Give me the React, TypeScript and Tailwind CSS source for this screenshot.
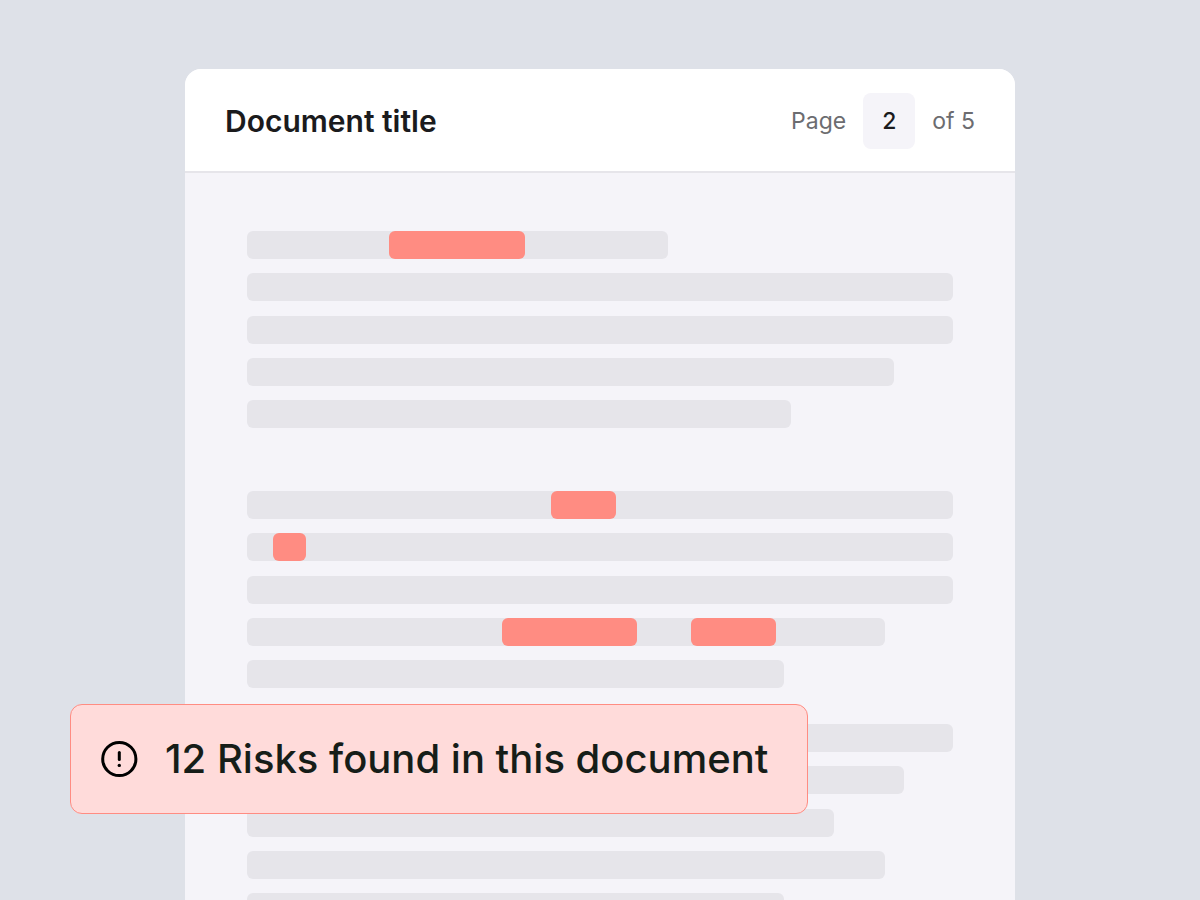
import { useState } from "react";

type Mark = { start: number; width: number };
type Line = { width: number; marks?: Mark[] };

// Line and mark sizes are in units of a full text line
const LINE_UNITS = 706;

const PARAGRAPHS: { id: string; spacing: string; lines: Line[] }[] = [
  {
    id: "intro",
    spacing: "",
    lines: [
      { width: 421, marks: [{ start: 142, width: 136 }] },
      { width: 706 },
      { width: 706 },
      { width: 647 },
      { width: 544 },
    ],
  },
  {
    id: "body",
    spacing: "mt-[63px]",
    lines: [
      { width: 706, marks: [{ start: 304, width: 65 }] },
      { width: 706, marks: [{ start: 26, width: 33 }] },
      { width: 706 },
      {
        width: 638,
        marks: [
          { start: 255, width: 135 },
          { start: 444, width: 85 },
        ],
      },
      { width: 537 },
    ],
  },
  {
    id: "closing",
    spacing: "mt-9",
    lines: [
      { width: 706 },
      { width: 657 },
      { width: 587 },
      { width: 638 },
      { width: 537 },
    ],
  },
];

const percent = (value: number) => `${(value / LINE_UNITS) * 100}%`;

function TextLine({ line }: { line: Line }) {
  return (
    <div className="relative h-7">
      <div
        className="h-full rounded-md bg-[#e6e5ea]"
        style={{ width: percent(line.width) }}
      />
      {line.marks?.map((mark) => (
        <span
          key={mark.start}
          className="absolute inset-y-0 rounded-md bg-[#ff8c82]"
          style={{ left: percent(mark.start), width: percent(mark.width) }}
        />
      ))}
    </div>
  );
}

function AlertIcon() {
  return (
    <svg
      className="size-10 shrink-0"
      viewBox="0 0 40 40"
      fill="none"
      stroke="#000"
      strokeLinecap="round"
      aria-hidden="true"
    >
      <circle cx="20.3" cy="20" r="16.6" strokeWidth="3" />
      <path d="M20.3 13.4v7.2" strokeWidth="3" />
      <circle cx="20.3" cy="26.4" r="1.7" fill="#000" stroke="none" />
    </svg>
  );
}

function DocumentHeader() {
  const [page, setPage] = useState("2");

  return (
    <header className="flex items-center justify-between border-b-2 border-[#e6e5ea] bg-white px-10 pt-6 pb-[22px]">
      <h1 className="text-[30px] leading-9 font-semibold text-[#1b1b1d]">
        Document title
      </h1>
      <div className="flex items-center gap-[17px] text-[23px] text-[#6c6c70]">
        <label htmlFor="page">Page</label>
        <input
          id="page"
          type="text"
          inputMode="numeric"
          value={page}
          onChange={(e) => setPage(e.target.value)}
          className="h-14 w-[52px] rounded-lg bg-[#f5f4f9] text-center font-medium text-[#1b1b1d]"
        />
        <span>of 5</span>
      </div>
    </header>
  );
}

export default function App() {
  return (
    <main className="flex h-screen justify-center overflow-hidden bg-[#dee1e8] pt-[69px] font-['Inter',sans-serif]">
      <div className="relative w-full max-w-[830px]">
        <article className="h-full overflow-hidden rounded-t-2xl bg-[#f5f4f9]">
          <DocumentHeader />
          <div className="px-[62px] pt-[58px]">
            {PARAGRAPHS.map((paragraph) => (
              <div
                key={paragraph.id}
                className={`flex h-[197px] flex-col justify-between ${paragraph.spacing}`}
              >
                {paragraph.lines.map((line, i) => (
                  <TextLine key={i} line={line} />
                ))}
              </div>
            ))}
          </div>
        </article>

        <div
          role="alert"
          className="absolute bottom-[86px] -left-[115px] flex h-[110px] items-center gap-[26px] rounded-xl border border-[#ff8c82] bg-[#ffdbda] pr-[39px] pl-7 text-[40px] font-medium whitespace-nowrap text-[#161d18]"
        >
          <AlertIcon />
          <p>12 Risks found in this document</p>
        </div>
      </div>
    </main>
  );
}
